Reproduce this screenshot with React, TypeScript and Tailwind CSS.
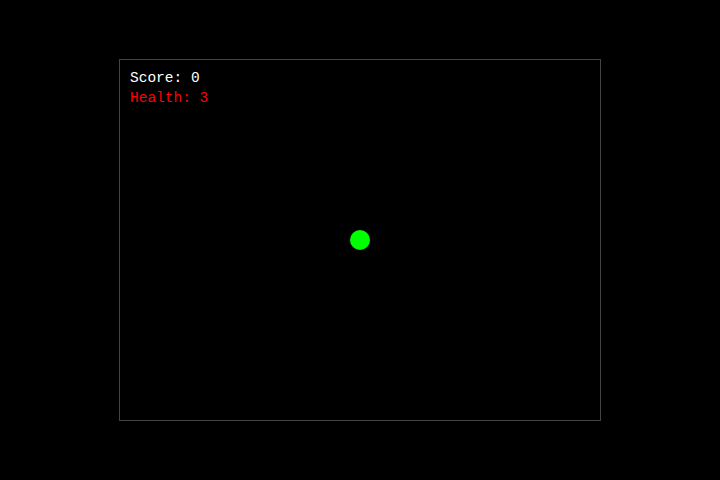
import React from "react";

export default function App() {
  return (
    <div className="w-[720px] h-[480px] bg-black flex items-center justify-center">
      <div className="relative w-[482px] h-[362px] border border-[#444444] bg-black">
        <div className="flex flex-col pl-[10px] pt-[8px] text-[14.5px] leading-[20px]" style={{ fontFamily: '"Liberation Mono", monospace' }}>
          <div className="text-white">Score: 0</div>
          <div className="text-[#ff0000]">Health: 3</div>
        </div>
        <div className="absolute left-[230px] top-[170px] w-[20px] h-[20px] rounded-full bg-[#00ff00]" />
      </div>
    </div>
  );
}
